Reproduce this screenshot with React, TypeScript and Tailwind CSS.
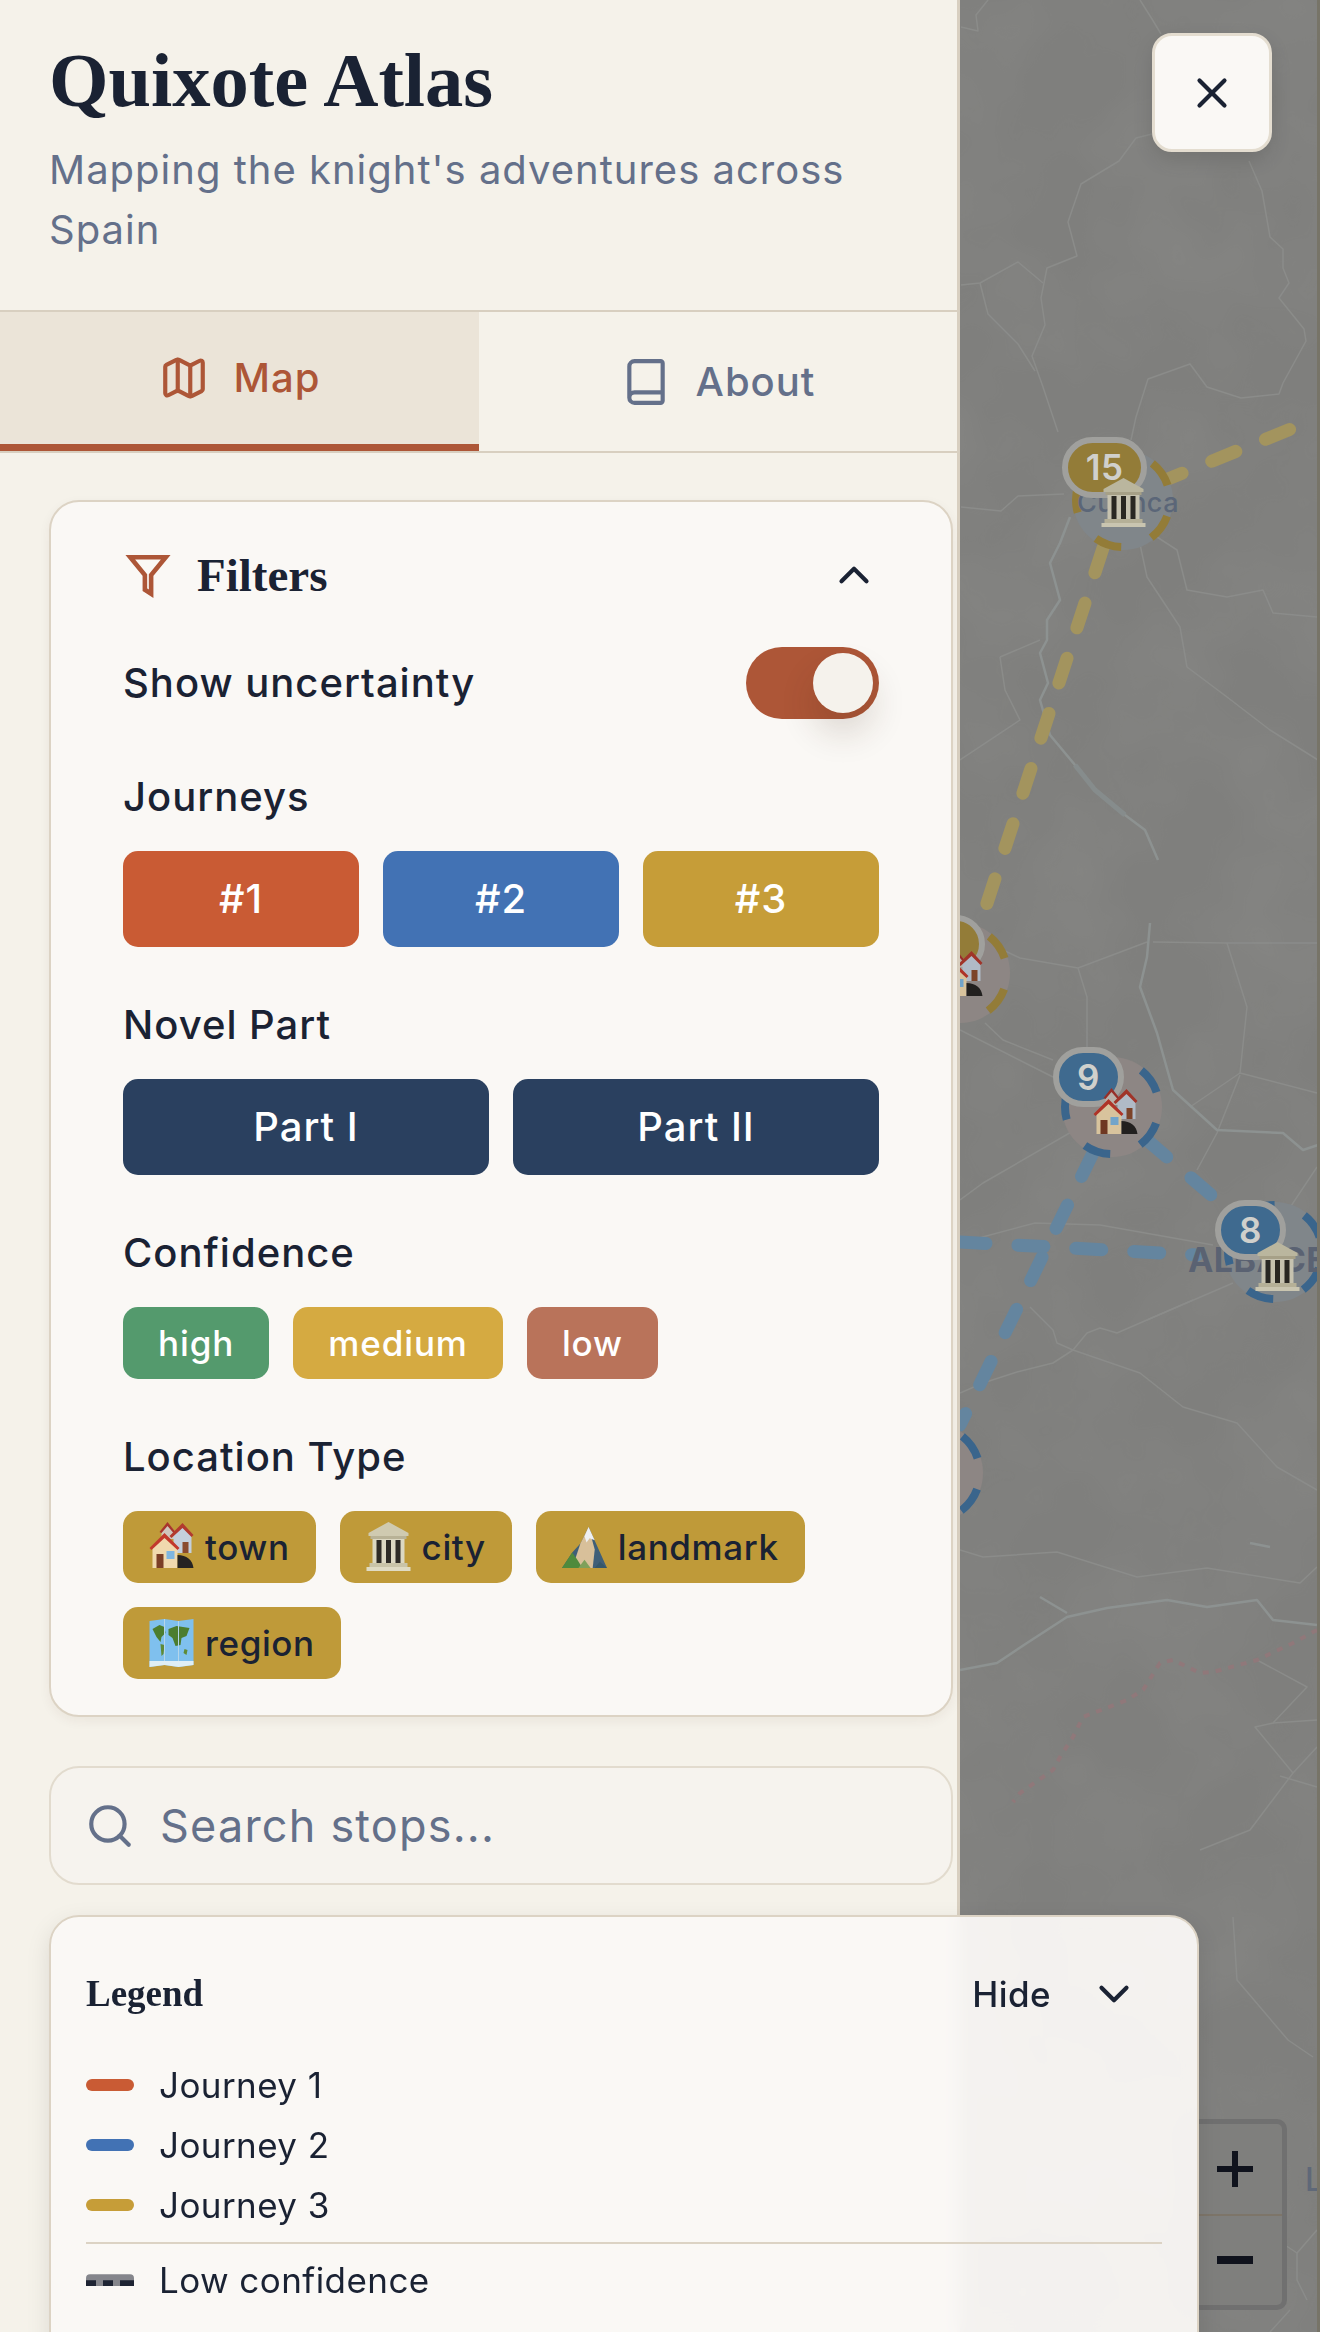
import { ChevronDown, ChevronUp, Map as MapIcon, Search, X } from "lucide-react";

const sans = "font-['Inter','Noto_Sans',sans-serif] tracking-[0.43px]";
const serif = "font-['Liberation_Serif','Times_New_Roman',serif] tracking-normal";

/* ── small pictures for the emoji the app uses ── */
function TownGlyph({ className }: { className?: string }) {
  return (
    <svg viewBox="0 0 44 50" className={className}>
      <path d="M12 9 18 1l7 8v8H12z" fill="#cfc6bd" />
      <path d="M10 10 18 0l8 10-2 1-6-7-6 7z" fill="#a8342c" />
      <path d="M24 11 33 3l9 9v19H24z" fill="#c4cfdc" />
      <path d="M20 14 33 1l11 12-2 2-9-9-11 10z" fill="#b23a2e" />
      <rect x="33" y="20" width="6" height="11" fill="#8a4a2e" />
      <path d="M3 24 15 13l13 12v21H3z" fill="#f0d9ae" />
      <path d="M0 26 15 11l15 15-2 2-13-12L2 28z" fill="#c2392c" />
      <rect x="7" y="32" width="7" height="14" fill="#7b3e26" />
      <rect x="17" y="29" width="8" height="8" fill="#7fb6e0" />
      <path d="M28 46V33c9 0 15 5 16 13z" fill="#262322" />
    </svg>
  );
}

function CityGlyph({ className }: { className?: string }) {
  return (
    <svg viewBox="0 0 44 50" className={className}>
      <path d="M22 0 42 11v3H2v-3z" fill="#cfcab0" />
      <rect x="4" y="14" width="36" height="3" fill="#b8b296" />
      <rect x="6" y="17" width="32" height="24" fill="#dcd8c2" />
      <rect x="10" y="18" width="5" height="23" fill="#2e2b26" />
      <rect x="19.500" y="18" width="5" height="23" fill="#2e2b26" />
      <rect x="29" y="18" width="5" height="23" fill="#2e2b26" />
      <rect x="3" y="41" width="38" height="4" fill="#c9c4a8" />
      <rect x="0" y="45" width="44" height="4" fill="#dfdbc4" />
    </svg>
  );
}

function PeakGlyph({ className }: { className?: string }) {
  return (
    <svg viewBox="0 0 44 44" className={className}>
      <path d="M0 42 10 27l8-9 8-16 18 40z" fill="#3f5f78" />
      <path d="M26 2 18 18 10 42h20l2-18z" fill="#d8c09a" />
      <path d="M26 2 32 15l-5-2-3 4-2-6z" fill="#eef0f2" />
      <path d="M0 42 10 27l5 7 5 8z" fill="#4f8a3c" />
      <path d="M16 42l6-8 6 8z" fill="#7fa05a" />
      <path d="M32 42l5-6 7 6z" fill="#35576a" />
    </svg>
  );
}

function WorldGlyph({ className }: { className?: string }) {
  return (
    <svg viewBox="0 0 44 48" className={className}>
      <path d="M0 2 15 0l14 2 15-2v46l-15 2-14-2-15 2z" fill="#7fc0ee" />
      <path d="M3 10 10 6l5 2 1 6-4 4-1 5-4-5zM19 10l8-3 13 2-3 8-5 2-1 7-5 1-3-8-4-3z" fill="#4c7d2f" />
      <path d="M11 25l4 1-1 9-2 2zM35 30l3 1-1 5-3-2z" fill="#5f8b36" />
      <path d="M15 0v46M29 2v46" stroke="#b5d6ea" strokeWidth="1" />
      <path d="M0 42h44v4l-15 2-14-2-15 2z" fill="#dfeef6" />
    </svg>
  );
}

const journeys = [
  { label: "#1", cls: "bg-[#c95b34]" },
  { label: "#2", cls: "bg-[#4272b4]" },
  { label: "#3", cls: "bg-[#c69d38]" },
];

const confidence = [
  { label: "high", cls: "bg-[#549a6d]" },
  { label: "medium", cls: "bg-[#d5aa41]" },
  { label: "low", cls: "bg-[#b9735a]" },
];

const types = [
  { label: "town", Glyph: TownGlyph, cls: "w-[45px] h-[50px]" },
  { label: "city", Glyph: CityGlyph, cls: "w-[45px] h-[50px]" },
  { label: "landmark", Glyph: PeakGlyph, cls: "w-[45px] h-[45px]" },
  { label: "region", Glyph: WorldGlyph, cls: "w-[45px] h-[48px]" },
];

const legend = [
  { label: "Journey 1", cls: "bg-[#c95b34]" },
  { label: "Journey 2", cls: "bg-[#4272b4]" },
  { label: "Journey 3", cls: "bg-[#c69d38]" },
];

/* ── map drawing, in page coordinates ── */
const thinLines = [
  "M988 0 976 15 978 31 961 27",
  "M1140 0 1152 19 1161 34",
  "M1152 134 1136 138 1119 161 1081 184 1068 222 1077 256 1047 268 1041 298 1045 325 1032 356 1043 387 1058 432",
  "M961 285 980 283 1018 262 1043 283",
  "M980 283 988 314 1018 344 1035 371",
  "M1249 161 1262 191 1270 237 1283 249 1283 268 1289 283 1279 298 1304 329 1306 341 1283 383 1279 394 1241 398 1207 387 1190 364 1148 379 1136 417 1131 440",
  "M961 507 1001 511 1018 496 1064 494",
  "M1137 530 1147 577 1180 627 1187 667 1227 697 1270 730 1318 760",
  "M1157 537 1177 550 1187 590 1227 597 1263 590 1273 613 1317 617",
  "M1000 657 1040 640",
  "M1000 657 1005 690 1020 720 960 760",
  "M1153 942 1227 943 1317 943",
  "M1227 943 1247 1007 1240 1073 1317 1093",
  "M1240 1073 1190 1107",
  "M1240 1075 1217 1133 1197 1170",
  "M1003 950 1020 958 1078 968 1147 942",
  "M1078 968 1087 997 1087 1047",
  "M985 1023 1003 1040 1053 1060",
  "M960 1030 1053 1077",
  "M1080 1127 983 1183 960 1200",
  "M960 1243 1035 1223 1100 1225 1213 1245",
  "M1317 1167 1273 1233 1257 1267",
  "M1233 1283 1147 1320",
  "M1193 1300 1117 1333 1100 1328 1087 1333 1073 1350 1053 1363 1017 1372 983 1383 960 1393",
  "M1030 1307 1053 1330 1057 1343 1073 1350 1140 1373 1183 1407 1237 1423 1277 1467 1317 1490",
  "M960 1550 983 1557 1057 1552 1137 1577 1207 1568 1300 1583 1317 1567",
  "M1257 1660 1307 1687 1273 1723 1255 1727 1293 1773 1317 1747",
  "M1273 1723 1317 1720",
  "M1293 1773 1250 1830 1200 1850",
  "M1280 1776 1317 1787",
  "M1233 1917 1237 1980 1288 2040 1313 2057",
  "M1282 2243 1297 2253 1297 2280 1307 2300",
  "M1297 2253 1317 2230",
  "M1290 2310 1270 2332",
];

const rivers = [
  "M1070 517 1060 543 1050 563 1060 600 1047 620 1047 640 1040 653 1048 683 1040 700 1050 735 1075 765 1095 790 1125 815 1145 830 1158 860",
  "M1150 923 1147 957 1140 987 1157 1033 1173 1090 1217 1130 1283 1133 1303 1150 1318 1145",
  "M960 1670 997 1663 1027 1643 1067 1617 1107 1608 1167 1600 1207 1607 1257 1600 1273 1620 1317 1625",
  "M1040 1597 1067 1613",
  "M1250 1543 1270 1547",
];

const routes = [
  { d: "M1158 483 1318 418", color: "#a3945e" },
  { d: "M1103 548 975 940", color: "#a3945e" },
  { d: "M1147 1140 1217 1200", color: "#64859f" },
  { d: "M1093 1153 960 1425", color: "#64859f" },
  { d: "M960 1242 1197 1255", color: "#64859f" },
];

const redDots = "M1317 1630 1293 1643 1257 1660 1213 1672 1200 1673 1173 1660 1160 1663 1143 1690 1127 1700 1083 1717 1073 1737 1060 1757 1053 1770 1020 1793 1013 1802";

const stops = [
  { cx: 1123, cy: 500, fill: "#80868a", ring: "#937c38" },
  { cx: 960, cy: 973, fill: "#8d8684", ring: "#937c38" },
  { cx: 1112, cy: 1107, fill: "#8d8684", ring: "#3a658c" },
  { cx: 1275, cy: 1252, fill: "#80868a", ring: "#3a658c" },
  { cx: 933, cy: 1473, fill: "#8d8684", ring: "#3a658c" },
];

const pills = [
  { n: "15", x: 102, y: 437, w: 85, h: 61, cls: "bg-[#937c38]" },
  { n: "9", x: 93, y: 1047, w: 71, h: 60, cls: "bg-[#3f6a8f]" },
  { n: "8", x: 255, y: 1200, w: 71, h: 60, cls: "bg-[#3f6a8f]" },
  { n: "", x: -40, y: 915, w: 65, h: 58, cls: "bg-[#937c38]" },
];

const mapGlyphs = [
  { x: 141, y: 478, Glyph: CityGlyph },
  { x: -22, y: 950, Glyph: TownGlyph },
  { x: 133, y: 1088, Glyph: TownGlyph },
  { x: 295, y: 1242, Glyph: CityGlyph },
];

function Atlas() {
  return (
    <div className="relative h-full flex-1 overflow-hidden bg-[#7f7f7d]">
      <svg viewBox="960 0 360 2332" className="absolute inset-0 h-full w-full" fill="none">
        <defs>
          <filter id="paper" x="0" y="0" width="100%" height="100%">
            <feTurbulence type="fractalNoise" baseFrequency="0.009" numOctaves="3" seed="7" />
            <feColorMatrix values="0 0 0 0 0.58  0 0 0 0 0.58  0 0 0 0 0.56  1.4 0 0 0 -0.45" />
          </filter>
        </defs>
        <rect x="960" y="0" width="360" height="2332" filter="url(#paper)" opacity="0.09" />
        {thinLines.map((d) => (
          <path key={d} d={d} stroke="#8b8c8a" strokeWidth="1.5" strokeLinejoin="round" />
        ))}
        {rivers.map((d) => (
          <path key={d} d={d} stroke="#8d9291" strokeWidth="2.5" strokeLinejoin="round" />
        ))}
        <path d="M1075 765 1095 790 1125 815" stroke="#868c8c" strokeWidth="5" />
        <path d={redDots} stroke="#90787a" strokeWidth="4" strokeDasharray="6 7" />
        {routes.map((r) => (
          <path key={r.d} d={r.d} stroke={r.color} strokeWidth="13" strokeLinecap="round" strokeDasharray="26 32" />
        ))}
        {stops.map((s) => (
          <g key={s.cx}>
            <circle cx={s.cx} cy={s.cy} r="50" fill={s.fill} />
            <circle cx={s.cx} cy={s.cy} r="47" stroke={s.ring} strokeWidth="8" strokeDasharray="27 32.060" strokeDashoffset="-16.500" />
          </g>
        ))}
      </svg>

      <span className={`${sans} absolute left-[117px] top-[483px] text-[27px] font-medium leading-[40px] text-[#5b6678]`}>Cuenca</span>
      <span className={`${sans} absolute left-[228px] top-[1238px] whitespace-nowrap text-[34px] font-bold leading-[44px] text-[#5a6272]`}>ALBACETE</span>
      <span className={`${sans} absolute left-[345px] top-[2158px] text-[32px] font-medium leading-[44px] text-[#5f6878]`}>L</span>

      {pills.map((p) => (
        <div
          key={p.y}
          className={`${sans} absolute flex items-center justify-center rounded-full border-[6px] border-[#a0a09d] text-[35px] font-semibold text-[#d0d0cc] ${p.cls}`}
          style={{ left: p.x, top: p.y, width: p.w, height: p.h }}
        >
          {p.n}
        </div>
      ))}

      {mapGlyphs.map((g) => (
        <div key={g.y} className="absolute h-[50px] w-[45px] brightness-90" style={{ left: g.x, top: g.y }}>
          <g.Glyph className="h-full w-full" />
        </div>
      ))}

      {/* zoom control */}
      <div className={`${sans} absolute right-[33px] top-[2119px] flex h-[191px] w-[105px] flex-col rounded-[10px] border-[5px] border-[#707070] bg-[#7f7f7d] text-[#10131d]`}>
        <div className="flex flex-1 items-center justify-center border-b-[2.5px] border-[#7d7569]">
          <svg viewBox="0 0 36 36" className="h-[36px] w-[36px]">
            <path d="M15 0h6v15h15v6H21v15h-6V21H0v-6h15z" fill="currentColor" />
          </svg>
        </div>
        <div className="flex flex-1 items-center justify-center">
          <div className="h-[8px] w-[36px] bg-current" />
        </div>
      </div>

      <div className="absolute right-0 top-0 h-full w-[3px] bg-[#777468]" />

      <button className="absolute left-[192px] top-[33px] flex h-[119px] w-[120px] items-center justify-center rounded-[20px] border-[3px] border-[#e4ddd0] bg-[#faf8f5] text-[#1a2233] shadow-[0_8px_20px_rgba(0,0,0,0.12)]">
        <X size={50} strokeWidth={2} />
      </button>
    </div>
  );
}

function SectionLabel({ children }: { children: string }) {
  return <div className="mb-[24px] h-[60px] text-[40px] font-medium leading-[60px] tracking-[1px]">{children}</div>;
}

function FilterCard() {
  return (
    <div className="w-[904px] rounded-[30px] border-[2.5px] border-[#dcd3c4] bg-[#faf8f5] pb-[36px] pl-[72px] pr-[72px] pt-[48px] shadow-[0_4px_12px_rgba(60,40,20,0.06)]">
      <div className="mb-[47px] flex h-[50px] items-center justify-between">
        <div className="flex items-center gap-[24px]">
          <svg viewBox="0 0 24 24" className="h-[50px] w-[50px] text-[#ad5637]" fill="none" stroke="currentColor" strokeWidth="2.2" strokeLinejoin="miter">
            <path d="M20.500 3.500h-17l7 8.500v7.100l3 1.900v-9z" />
          </svg>
          <span className={`${serif} text-[47px] font-bold leading-[50px]`}>Filters</span>
        </div>
        <ChevronUp size={50} strokeWidth={2} />
      </div>

      <div className="mb-[48px] flex h-[72px] items-center justify-between">
        <span className="text-[40px] font-medium leading-[60px] tracking-[1px]">Show uncertainty</span>
        <div className="relative h-[72px] w-[133px] rounded-full bg-[#ad5637]">
          <div className="absolute right-[6px] top-[6px] h-[60px] w-[60px] rounded-full bg-[#f5f2ec] shadow-[0_20px_35px_rgba(60,40,20,0.16)]" />
        </div>
      </div>

      <SectionLabel>Journeys</SectionLabel>
      <div className="mb-[48px] grid grid-cols-3 gap-[24px]">
        {journeys.map((j) => (
          <div key={j.label} className={`flex h-[96px] items-center justify-center rounded-[15px] text-[40px] font-medium tracking-[1px] text-white ${j.cls}`}>
            {j.label}
          </div>
        ))}
      </div>

      <SectionLabel>Novel Part</SectionLabel>
      <div className="mb-[48px] grid grid-cols-2 gap-[24px]">
        {["Part I", "Part II"].map((p) => (
          <div key={p} className="flex h-[96px] items-center justify-center rounded-[15px] bg-[#2a405f] text-[40px] font-medium tracking-[1px] text-white">
            {p}
          </div>
        ))}
      </div>

      <SectionLabel>Confidence</SectionLabel>
      <div className="mb-[48px] flex gap-[24px]">
        {confidence.map((c) => (
          <div key={c.label} className={`flex h-[72px] items-center rounded-[15px] px-[35px] text-[35px] font-medium tracking-[0.9px] text-white ${c.cls}`}>
            {c.label}
          </div>
        ))}
      </div>

      <SectionLabel>Location Type</SectionLabel>
      <div className="flex flex-wrap gap-[24px]">
        {types.map((t) => (
          <div key={t.label} className="flex h-[72px] items-center gap-[11px] rounded-[15px] bg-[#bf9a39] px-[26px] text-[35px] font-medium tracking-[0.6px]">
            <t.Glyph className={t.cls} />
            {t.label}
          </div>
        ))}
      </div>
    </div>
  );
}

// lucide's closed Book icon, the one the About tab uses
function BookGlyph() {
  return (
    <svg viewBox="0 0 24 24" className="h-[50px] w-[50px]" fill="none" stroke="currentColor" strokeWidth="2" strokeLinecap="round" strokeLinejoin="round">
      <path d="M4 19.500v-15A2.500 2.500 0 0 1 6.500 2H19a1 1 0 0 1 1 1v18a1 1 0 0 1-1 1H6.500a1 1 0 0 1 0-5H20" />
    </svg>
  );
}

function Sidebar() {
  return (
    <aside className="flex h-full w-[960px] shrink-0 flex-col border-r-[3px] border-[#d8cfc0] bg-[#f5f2ea]">
      <header className="border-b-[2.5px] border-[#d8cfc0] pb-[50px] pl-[49px] pr-[50px] pt-[36px]">
        <h1 className={`${serif} mb-[14px] text-[76.5px] font-bold leading-[90px]`}>Quixote Atlas</h1>
        <p className="text-[40px] leading-[60px] tracking-[1px] text-[#64708a]">Mapping the knight's adventures across Spain</p>
      </header>

      <nav className="flex h-[141px] border-b-[2.5px] border-[#d8cfc0]">
        <div className="flex w-[479px] items-center justify-center gap-[25px] border-b-[7px] border-[#ad5637] bg-[#ebe4d8] text-[#ad5637]">
          <MapIcon size={50} strokeWidth={2} />
          <span className="text-[40px] font-medium tracking-[1px]">Map</span>
        </div>
        <div className="flex flex-1 items-center justify-center gap-[25px] text-[#64708a]">
          <BookGlyph />
          <span className="text-[40px] font-medium tracking-[1px]">About</span>
        </div>
      </nav>

      <div className="flex flex-col gap-[49px] pl-[49px] pt-[47px]">
        <FilterCard />
        <div className="flex h-[119px] w-[904px] items-center gap-[25px] rounded-[30px] border-[2.5px] border-[#e2dbce] bg-[#f6f3ee] pl-[34px]">
          <Search size={50} strokeWidth={2} className="shrink-0 text-[#64708a]" />
          <input
            readOnly
            placeholder="Search stops..."
            className="w-full bg-transparent text-[45px] tracking-[1.2px] outline-none placeholder:text-[#64708a]"
          />
        </div>
      </div>
    </aside>
  );
}

function Legend() {
  return (
    <div className="absolute left-[49px] top-[1915px] h-[500px] w-[1150px] rounded-[30px] border-[2.5px] border-[#dcd3c4] bg-[#faf8f5]/95 pl-[35px] pr-[35px] pt-[37px] shadow-[0_8px_24px_rgba(0,0,0,0.1)] backdrop-blur-sm">
      <div className="mb-[21px] flex h-[80px] items-center justify-between">
        <span className={`${serif} text-[37px] font-bold`}>Legend</span>
        <div className="flex items-center gap-[38px] pr-[23px]">
          <span className="text-[35px] font-medium">Hide</span>
          <ChevronDown size={50} strokeWidth={2} />
        </div>
      </div>
      {legend.map((l) => (
        <div key={l.label} className="flex h-[60px] items-center gap-[25px]">
          <div className={`h-[12.5px] w-[48px] rounded-full ${l.cls}`} />
          <span className="text-[35px]">{l.label}</span>
        </div>
      ))}
      <div className="mt-[7px] flex h-[67px] items-center gap-[25px] border-t-[2.5px] border-[#dcd3c4] pt-[7px]">
        <svg viewBox="0 0 48 12" className="h-[12.5px] w-[48px]">
          <path d="M4 0h40a4 4 0 0 1 4 4v8H0V4a4 4 0 0 1 4-4z" fill="#85868c" />
          <path d="M0 6h10v6H0zM17 6h10v6H17zM34 6h14v6H34z" fill="#1e2433" />
        </svg>
        <span className="text-[35px]">Low confidence</span>
      </div>
    </div>
  );
}

export default function App() {
  return (
    <div className={`${sans} relative flex h-[2332px] w-[1320px] overflow-hidden text-[#1a2233]`}>
      <Sidebar />
      <Atlas />
      <Legend />
    </div>
  );
}
